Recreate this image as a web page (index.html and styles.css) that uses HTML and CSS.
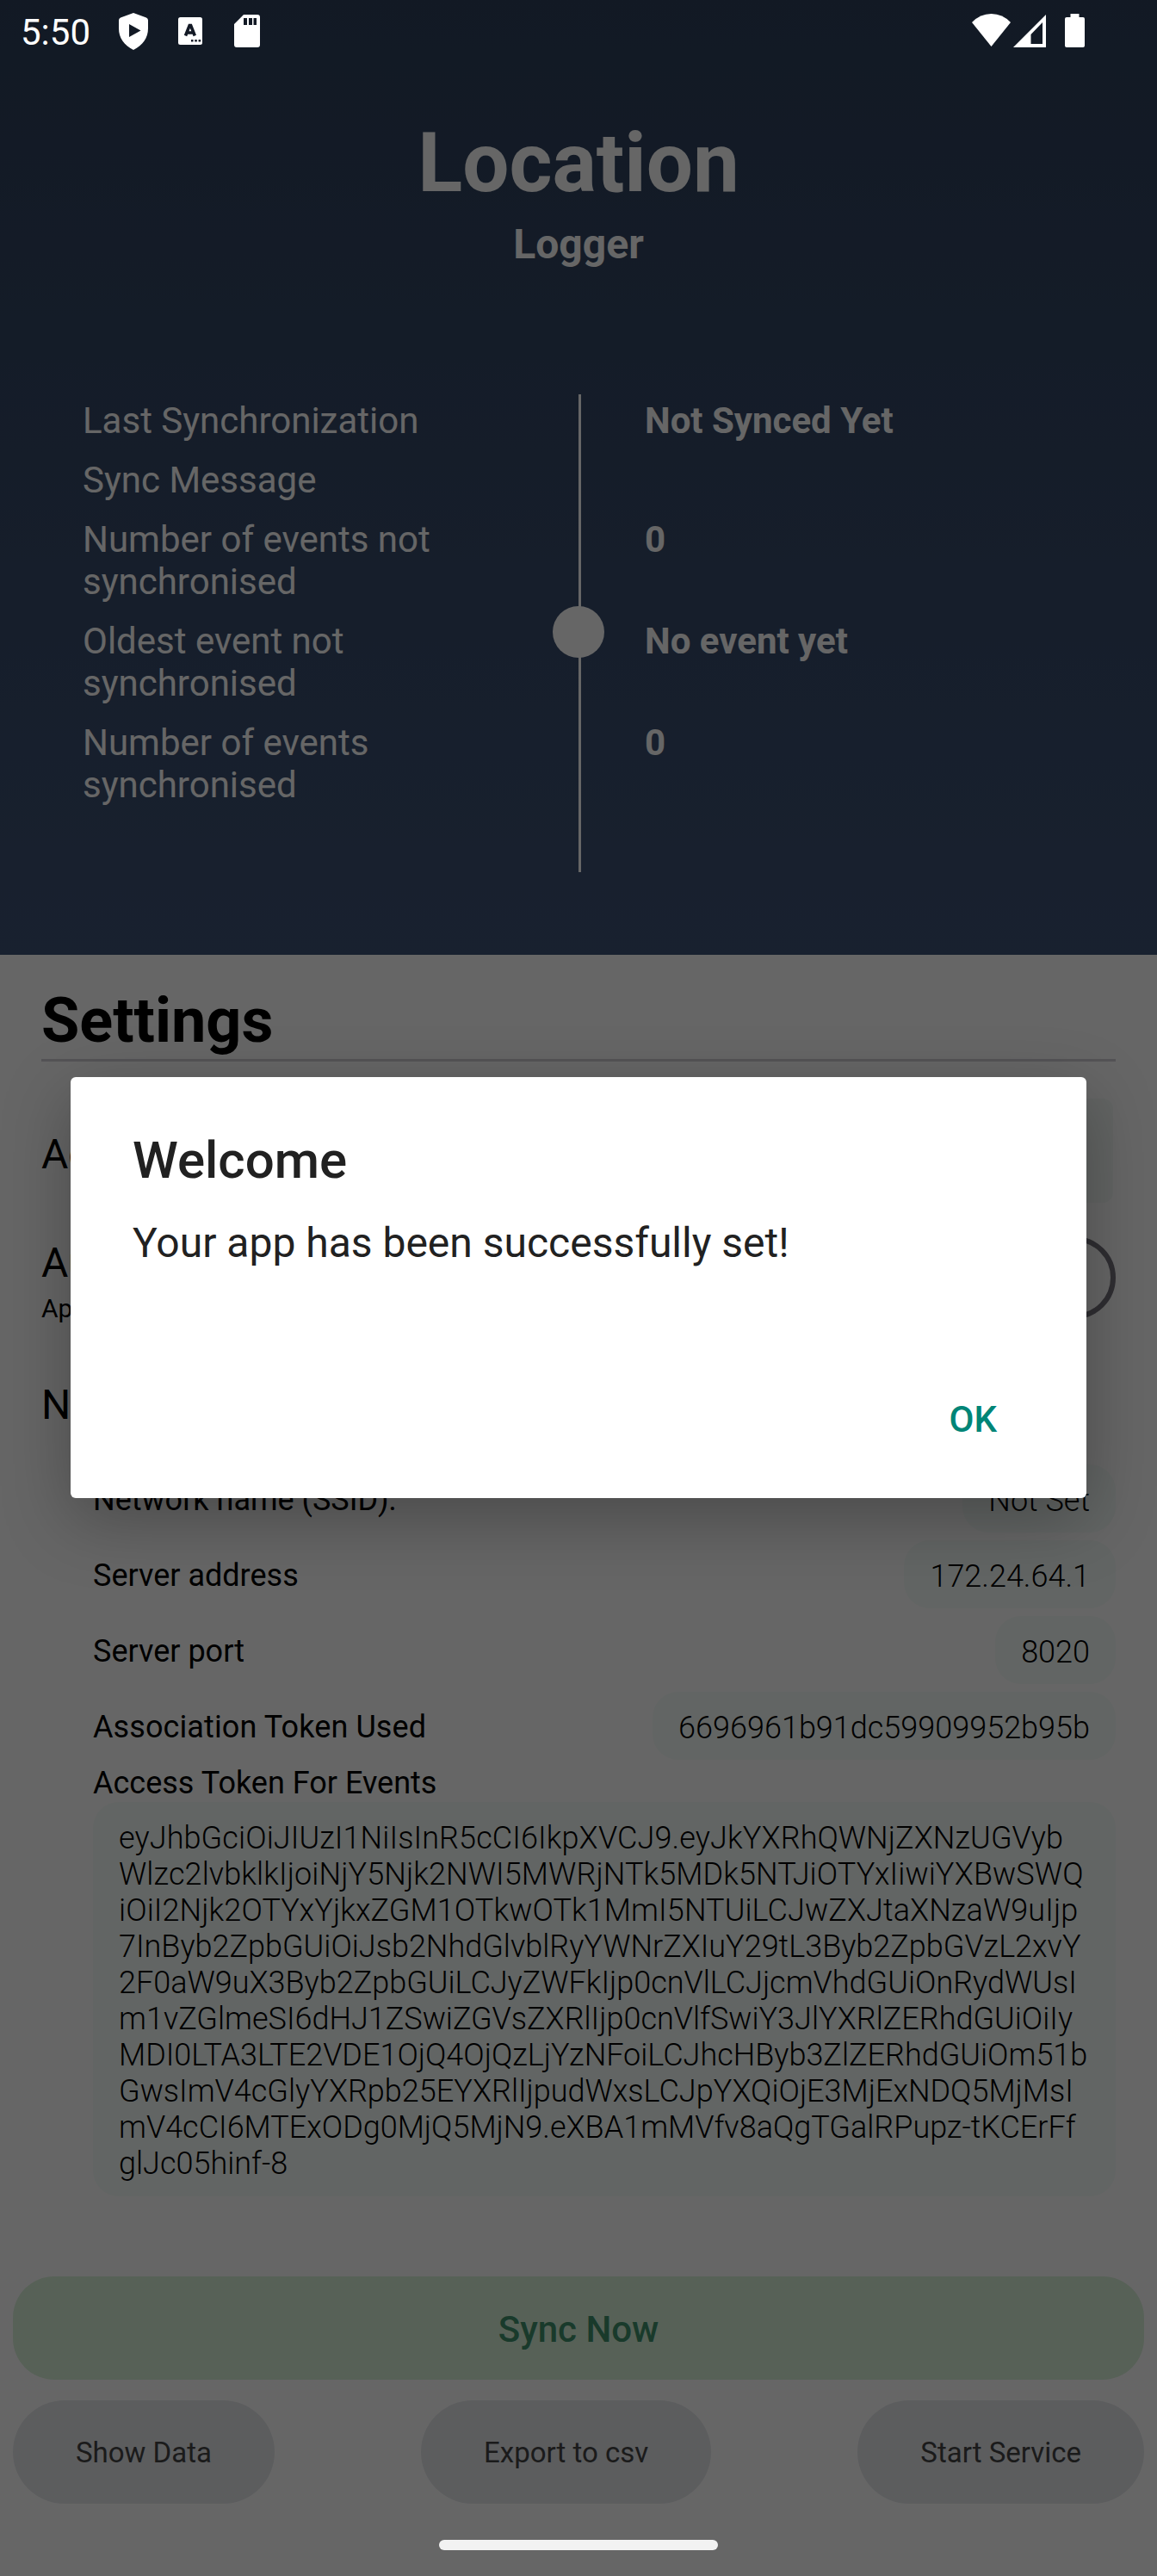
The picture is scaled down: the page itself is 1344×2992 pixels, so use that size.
FILE: index.html
```html
<!DOCTYPE html>
<html lang="en">
<head>
<meta charset="utf-8">
<title>Location Logger</title>
<link rel="stylesheet" href="styles.css">
</head>
<body>
<div class="screen">
  <header class="hero">
    <h1 class="hero-title">Location</h1>
    <p class="hero-subtitle">Logger</p>
    <div class="stats">
      <dl class="stats-list">
        <div class="stat"><dt>Last Synchronization</dt><dd>Not Synced Yet</dd></div>
        <div class="stat"><dt>Sync Message</dt><dd></dd></div>
        <div class="stat"><dt>Number of events not synchronised</dt><dd>0</dd></div>
        <div class="stat"><dt>Oldest event not synchronised</dt><dd>No event yet</dd></div>
        <div class="stat"><dt>Number of events synchronised</dt><dd>0</dd></div>
      </dl>
      <span class="stats-line"></span>
      <span class="stats-dot"></span>
    </div>
  </header>

  <main class="settings">
    <h2 class="settings-title">Settings</h2>
    <div class="row row-account"><span>Acct</span><span class="field"></span></div>
    <div class="row row-auto">
      <div><div class="label">Auto</div><div class="hint">App on</div></div>
      <span class="switch"></span>
    </div>
    <div class="section-label">Network</div>
    <div class="details">
      <div class="detail"><span class="detail-name">Network name (SSID):</span><span class="chip">Not Set</span></div>
      <div class="detail"><span class="detail-name">Server address</span><span class="chip">172.24.64.1</span></div>
      <div class="detail"><span class="detail-name">Server port</span><span class="chip">8020</span></div>
      <div class="detail"><span class="detail-name loose">Association Token Used</span><span class="chip">6696961b91dc59909952b95b</span></div>
      <div class="token-label">Access Token For Events</div>
      <div class="token"><span class="loose">eyJhbGciOiJIUzI1NiIsInR5cCI6IkpXVCJ9.eyJkYXRhQWNjZXNzUGVyb<br>Wlzc2lvbklkIjoiNjY5Njk2NWI5MWRjNTk5MDk5NTJiOTYxIiwiYXBwSWQ<br>iOiI2Njk2OTYxYjkxZGM1OTkwOTk1MmI5NTUiLCJwZXJtaXNzaW9uIjp</span><br>7InByb2ZpbGUiOiJsb2NhdGlvblRyYWNrZXIuY29tL3Byb2ZpbGVzL2xvY<br>2F0aW9uX3Byb2ZpbGUiLCJyZWFkIjp0cnVlLCJjcmVhdGUiOnRydWUsI<br>m1vZGlmeSI6dHJ1ZSwiZGVsZXRlIjp0cnVlfSwiY3JlYXRlZERhdGUiOiIy<br>MDI0LTA3LTE2VDE1OjQ4OjQzLjYzNFoiLCJhcHByb3ZlZERhdGUiOm51b<br>GwsImV4cGlyYXRpb25EYXRlIjpudWxsLCJpYXQiOjE3MjExNDQ5MjMsI<br>mV4cCI6MTExODg0MjQ5MjN9.eXBA1mMVfv8aQgTGalRPupz-tKCErFf<br>glJc05hinf-8</div>
    </div>
  </main>

  <footer class="actions">
    <button class="btn btn-primary">Sync Now</button>
    <div class="btn-row">
      <button class="btn btn-secondary">Show Data</button>
      <button class="btn btn-secondary">Export to csv</button>
      <button class="btn btn-secondary">Start Service</button>
    </div>
  </footer>

  <div class="scrim">
    <section class="dialog">
      <h3 class="dialog-title">Welcome</h3>
      <p class="dialog-text">Your app has been successfully set!</p>
      <button class="dialog-ok">OK</button>
    </section>
  </div>

  <div class="status">
    <span class="clock">5:50</span>
    <svg class="ic-shield" width="34" height="43" viewBox="0 0 34 43"><path fill="#fff" fill-rule="evenodd" d="M17 0 32 5.500Q34 6.300 34 8.500V18C34 29 28 37.500 17 43 6 37.500 0 29 0 18V8.500Q0 6.300 2 5.500ZM12 13V28L25.500 20.500Z"/></svg>
    <svg class="ic-a" width="28" height="32" viewBox="0 0 28 32"><rect width="28" height="32" rx="2.500" fill="#fff"/><path d="M8.500 21.500 13.200 9.500H14.600L19.300 21.500M10.500 18H17.300" fill="none" stroke="#131925" stroke-width="3.600"/><path d="M15 26h2.500v2.500H15zM19.300 26h2.500v2.500h-2.500zM23.600 26h2.500v2.500h-2.500z" fill="#131925"/></svg>
    <svg class="ic-sd" width="30" height="38" viewBox="0 0 30 38"><path fill="#fff" fill-rule="evenodd" d="M11 0H27Q30 0 30 3V35Q30 38 27 38H3Q0 38 0 35V11ZM11 4V12H15V4ZM17 4V12H21V4ZM22.500 4V12H26V4Z"/></svg>
    <span class="spacer"></span>
    <svg class="ic-wifi" width="45" height="38" viewBox="0 0 45 38"><path fill="#fff" d="M0 10Q9.500 0 22.500 0 35.500 0 45 10L22.500 38Z"/></svg>
    <svg class="ic-cell" width="38" height="38" viewBox="0 0 38 38"><path fill="#fff" fill-rule="evenodd" d="M38 0V38H0ZM34 9 20.500 23V34H34Z"/></svg>
    <svg class="ic-battery" width="23" height="39" viewBox="0 0 23 39"><path fill="#fff" d="M6.500 0H16.500V4H21Q23 4 23 6V37Q23 39 21 39H2Q0 39 0 37V6Q0 4 2 4H6.500Z"/></svg>
  </div>
  <span class="nav-handle"></span>
</div>
</body>
</html>
```
FILE: styles.css
```css
* { box-sizing: border-box; }
body, h1, h2, h3, p, dl, dd { margin: 0; }
body { background: #fff; font-family: Roboto, "Liberation Sans", sans-serif; color: #000; }
button { border: 0; font-family: inherit; }

.screen {
  position: relative;
  width: 1344px;
  height: 2992px;
  display: flex;
  flex-direction: column;
  overflow: hidden;
}

/* Header */
.hero {
  height: 1109px;
  padding-top: 133px;
  background: linear-gradient(#2e405b, #3e5376);
  color: #fff;
  flex: none;
}
.hero-title { font-size: 96px; line-height: 112px; text-align: center; }
.hero-subtitle { margin-top: 11px; font-size: 48px; line-height: 56px; font-weight: 700; text-align: center; }
.stats { position: relative; height: 555px; margin-top: 146px; padding: 6px 96px 0; }
.stats-list { display: flex; flex-direction: column; gap: 20px; }
.stat { display: flex; font-size: 42px; line-height: 49px; }
.stat dt { width: 653px; padding-right: 160px; flex: none; }
.stat dd { font-weight: 700; }
.stats-line { position: absolute; left: 672px; top: 0; width: 3px; height: 555px; background: #fff; }
.stats-dot { position: absolute; left: 642px; top: 246px; width: 60px; height: 60px; border-radius: 50%; background: #fff; }

/* Settings */
.settings { padding: 35px 48px 0; }
.settings-title { font-size: 72px; line-height: 84px; padding-bottom: 2px; border-bottom: 3px solid #d2d0d8; }
.row { display: flex; justify-content: space-between; align-items: flex-start; font-size: 48px; line-height: 56px; }
.row-account { height: 121px; margin-top: 43px; padding-top: 37px; }
.field { width: 600px; height: 121px; margin: -37px 3px 0 0; border-radius: 12px; background: #f4fbf8; }
.row-auto { height: 96px; margin-top: 39px; }
.label { margin-top: 3px; }
.hint { margin-top: 7px; font-size: 30px; line-height: 35px; }
.switch { width: 156px; height: 96px; border: 6px solid #77747e; border-radius: 48px; }
.section-label { margin-top: 72px; font-size: 48px; line-height: 56px; }
.details { margin-top: 41px; padding-left: 60px; font-size: 36px; line-height: 42px; }
.detail { display: flex; justify-content: space-between; align-items: center; height: 79px; margin-bottom: 9px; }
.detail-name { padding-top: 3px; }
.loose { letter-spacing: .1px; }
.chip { padding: 21px 30px 16px; border-radius: 30px; background: #f6fcf9; font-weight: 300; }
.token-label { margin-top: -3px; }
.token { height: 458px; margin-top: 1px; padding: 21px 30px 17px; border-radius: 30px; background: #f6fcf9; font-weight: 300; white-space: nowrap; }

/* Bottom actions */
.actions { margin-top: 93px; padding: 0 15px; }
.btn { height: 120px; }
.btn-primary { display: block; width: 100%; padding: 3px 0 0; border-radius: 48px; background: #daf2da; color: #40916c; font-size: 42px; font-weight: 500; }
.btn-row { display: flex; justify-content: space-between; margin-top: 24px; }
.btn-secondary { padding: 0 73px; border-radius: 60px; background: #e6e8ec; color: #454545; font-size: 33px; }

/* Modal */
.scrim { position: absolute; inset: 0; display: flex; align-items: center; justify-content: center; padding-bottom: 1px; background: rgba(0, 0, 0, .6); }
.dialog {
  position: relative;
  width: 1180px;
  height: 489px;
  padding: 62px 72px;
  border-radius: 6px;
  background: #fff;
  color: #212121;
  box-shadow: 0 24px 80px rgba(0, 0, 0, .28);
  display: flex;
  flex-direction: column;
  align-items: flex-start;
}
.dialog-title { font-size: 60px; line-height: 70px; font-weight: 500; }
.dialog-text { margin-top: 33px; font-size: 48px; line-height: 56px; }
.dialog-ok { margin: 152px 32px 0 auto; padding: 0; background: none; color: #008577; font-size: 42px; line-height: 49px; font-weight: 500; }

/* System bars */
.status { position: absolute; inset: 0 0 auto; height: 72px; padding-left: 24px; display: flex; align-items: flex-start; }
.clock { width: 114px; margin-top: 13px; color: #fff; font-size: 42px; line-height: 49px; }
.ic-shield { margin-top: 15px; }
.ic-a { margin: 20px 0 0 35px; }
.ic-sd { margin: 17px 0 0 37px; }
.spacer { flex: 1; }
.ic-wifi { margin-top: 16px; }
.ic-cell { margin: 17px 0 0 3px; }
.ic-battery { margin: 16px 84px 0 22px; }
.nav-handle { position: absolute; left: 510px; top: 2950px; width: 324px; height: 12px; border-radius: 6px; background: #f2f2f2; }
```
